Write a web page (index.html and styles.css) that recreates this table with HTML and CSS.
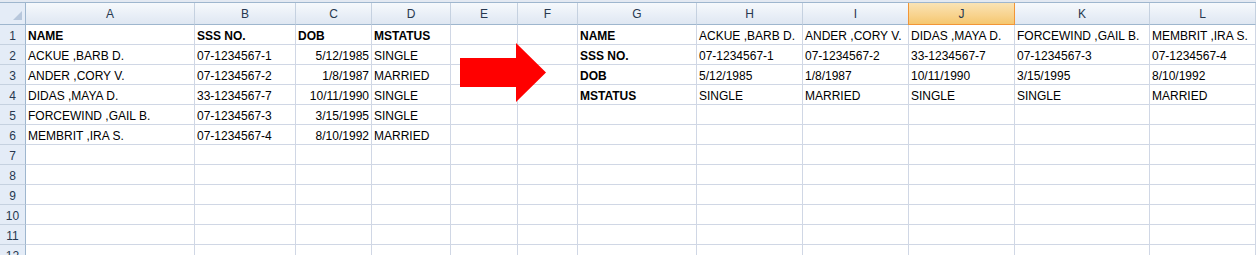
FILE: index.html
```html
<!DOCTYPE html>
<html lang="en">
<head>
    <meta charset="UTF-8">
    <title>Book1 - Transpose</title>
    <link rel="stylesheet" href="styles.css">
</head>
<body>
    <div class="sheet">
        <div class="grid">
            <!-- column headers -->
            <div class="hd corner"><span class="corner-mark"></span></div>
            <div class="hd">A</div>
            <div class="hd">B</div>
            <div class="hd">C</div>
            <div class="hd">D</div>
            <div class="hd">E</div>
            <div class="hd">F</div>
            <div class="hd">G</div>
            <div class="hd">H</div>
            <div class="hd">I</div>
            <div class="hd active">J</div>
            <div class="hd">K</div>
            <div class="hd">L</div>

            <div class="rn">1</div>
            <div class="c b">NAME</div>
            <div class="c b">SSS NO.</div>
            <div class="c b">DOB</div>
            <div class="c b">MSTATUS</div>
            <div class="c"></div>
            <div class="c"></div>
            <div class="c b">NAME</div>
            <div class="c">ACKUE ,BARB D.</div>
            <div class="c">ANDER ,CORY V.</div>
            <div class="c">DIDAS ,MAYA D.</div>
            <div class="c">FORCEWIND ,GAIL B.</div>
            <div class="c">MEMBRIT ,IRA S.</div>

            <div class="rn">2</div>
            <div class="c">ACKUE ,BARB D.</div>
            <div class="c">07-1234567-1</div>
            <div class="c num">5/12/1985</div>
            <div class="c">SINGLE</div>
            <div class="c"></div>
            <div class="c"></div>
            <div class="c b">SSS NO.</div>
            <div class="c">07-1234567-1</div>
            <div class="c">07-1234567-2</div>
            <div class="c">33-1234567-7</div>
            <div class="c">07-1234567-3</div>
            <div class="c">07-1234567-4</div>

            <div class="rn">3</div>
            <div class="c">ANDER ,CORY V.</div>
            <div class="c">07-1234567-2</div>
            <div class="c num">1/8/1987</div>
            <div class="c">MARRIED</div>
            <div class="c"></div>
            <div class="c"></div>
            <div class="c b">DOB</div>
            <div class="c">5/12/1985</div>
            <div class="c">1/8/1987</div>
            <div class="c">10/11/1990</div>
            <div class="c">3/15/1995</div>
            <div class="c">8/10/1992</div>

            <div class="rn">4</div>
            <div class="c">DIDAS ,MAYA D.</div>
            <div class="c">33-1234567-7</div>
            <div class="c num">10/11/1990</div>
            <div class="c">SINGLE</div>
            <div class="c"></div>
            <div class="c"></div>
            <div class="c b">MSTATUS</div>
            <div class="c">SINGLE</div>
            <div class="c">MARRIED</div>
            <div class="c">SINGLE</div>
            <div class="c">SINGLE</div>
            <div class="c">MARRIED</div>

            <div class="rn">5</div>
            <div class="c">FORCEWIND ,GAIL B.</div>
            <div class="c">07-1234567-3</div>
            <div class="c num">3/15/1995</div>
            <div class="c">SINGLE</div>
            <div class="c"></div><div class="c"></div><div class="c"></div><div class="c"></div>
            <div class="c"></div><div class="c"></div><div class="c"></div><div class="c"></div>

            <div class="rn">6</div>
            <div class="c">MEMBRIT ,IRA S.</div>
            <div class="c">07-1234567-4</div>
            <div class="c num">8/10/1992</div>
            <div class="c">MARRIED</div>
            <div class="c"></div><div class="c"></div><div class="c"></div><div class="c"></div>
            <div class="c"></div><div class="c"></div><div class="c"></div><div class="c"></div>

            <div class="rn">7</div>
            <div class="c"></div><div class="c"></div><div class="c"></div><div class="c"></div>
            <div class="c"></div><div class="c"></div><div class="c"></div><div class="c"></div>
            <div class="c"></div><div class="c"></div><div class="c"></div><div class="c"></div>

            <div class="rn">8</div>
            <div class="c"></div><div class="c"></div><div class="c"></div><div class="c"></div>
            <div class="c"></div><div class="c"></div><div class="c"></div><div class="c"></div>
            <div class="c"></div><div class="c"></div><div class="c"></div><div class="c"></div>

            <div class="rn">9</div>
            <div class="c"></div><div class="c"></div><div class="c"></div><div class="c"></div>
            <div class="c"></div><div class="c"></div><div class="c"></div><div class="c"></div>
            <div class="c"></div><div class="c"></div><div class="c"></div><div class="c"></div>

            <div class="rn">10</div>
            <div class="c"></div><div class="c"></div><div class="c"></div><div class="c"></div>
            <div class="c"></div><div class="c"></div><div class="c"></div><div class="c"></div>
            <div class="c"></div><div class="c"></div><div class="c"></div><div class="c"></div>

            <div class="rn">11</div>
            <div class="c"></div><div class="c"></div><div class="c"></div><div class="c"></div>
            <div class="c"></div><div class="c"></div><div class="c"></div><div class="c"></div>
            <div class="c"></div><div class="c"></div><div class="c"></div><div class="c"></div>

            <div class="rn">12</div>
            <div class="c"></div><div class="c"></div><div class="c"></div><div class="c"></div>
            <div class="c"></div><div class="c"></div><div class="c"></div><div class="c"></div>
            <div class="c"></div><div class="c"></div><div class="c"></div><div class="c"></div>
        </div>

        <!-- big red arrow shape sitting over columns E and F -->
        <svg class="arrow" width="88" height="62" viewBox="0 0 88 62">
            <polygon points="0,15 56,15 56,0 86,29.5 56,59 56,44 0,44" fill="#ff0000"/>
        </svg>
    </div>
</body>
</html>
```

FILE: styles.css
```css
body {
    margin: 0;
    padding: 0;
    background: #fff;
    font-family: "Liberation Sans", Arial, sans-serif;
    font-size: 12px;
    color: #000;
    overflow: hidden;
}
.sheet {
    position: relative;
    padding-top: 2px;
    background: #e3e9f2;
    height: 253px;
}
.grid {
    display: grid;
    grid-template-columns: 26px 169px 101px 76px 79px 67px 60px 119px 106px 106px 106px 135px 106px;
    grid-template-rows: 22px;
    grid-auto-rows: 20px;
    border-top: 1px solid #9eb6ce;
    background: #fff;
}
.grid > div {
    box-sizing: border-box;
    white-space: nowrap;
    overflow: hidden;
}

/* column header strip */
.hd {
    background: linear-gradient(#f6f9fc, #e9eff7 55%, #dfe7f2);
    border-right: 1px solid #c5d1e0;
    border-bottom: 1px solid #9eb6ce;
    color: #27384f;
    text-align: center;
    line-height: 18px;
    padding-top: 2px;
}
.hd.active {
    background: linear-gradient(#fae3b5, #f8d490 55%, #f5c76f);
    border-right-color: #f29536;
    border-bottom-color: #f29536;
    box-shadow: inset 1px 0 0 #f29536;
    margin-left: -1px;
    padding-left: 1px;
}
.corner {
    position: relative;
    background: #e4ecf7;
    border-right: 1px solid #9eb6ce;
}
.corner-mark {
    position: absolute;
    right: 3px;
    bottom: 4px;
    width: 9px;
    height: 9px;
    background: #b7c7dc;
    clip-path: polygon(100% 0, 100% 100%, 0 100%);
}

/* row numbers */
.rn {
    background: #e4ecf7;
    border-right: 1px solid #9eb6ce;
    border-bottom: 1px solid #c5d1e0;
    color: #27384f;
    text-align: center;
    line-height: 16px;
    padding-top: 3px;
}

/* cells */
.c {
    border-right: 1px solid #d0d7e5;
    border-bottom: 1px solid #d0d7e5;
    line-height: 16px;
    padding: 3px 2px 0 2px;
}
.c.b {
    font-weight: bold;
}
.c.num {
    text-align: right;
}

.arrow {
    position: absolute;
    left: 460px;
    top: 43px;
}
```
